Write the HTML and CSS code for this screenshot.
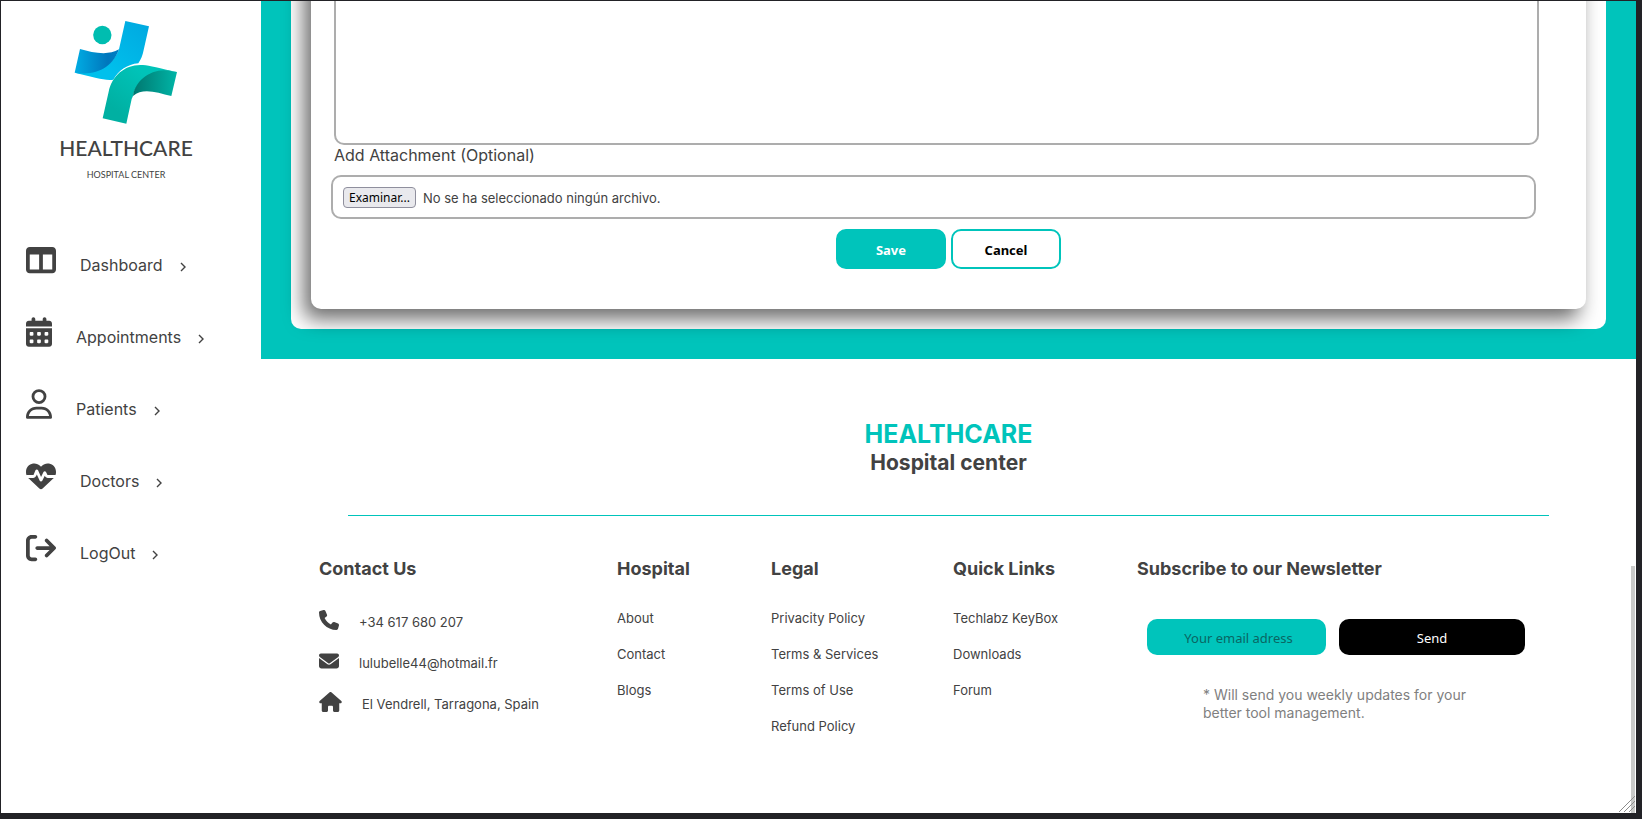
FILE: index.html
```html
<!DOCTYPE html>
<html lang="en">
<head>
<meta charset="utf-8">
<title>Healthcare Hospital Center</title>
<link rel="stylesheet" href="styles.css">
</head>
<body>
<div class="window">
  <aside class="sidebar">
    <div class="logo">
      <svg class="logo-mark" viewBox="220 60 318 315" aria-hidden="true">
        <defs>
          <linearGradient id="blue" x1="0" y1="1" x2="1" y2="0"><stop offset=".3" stop-color="#00c0ec"/><stop offset="1" stop-color="#00a8e0"/></linearGradient>
          <linearGradient id="blueFold" x1="0" y1="0" x2="1" y2="0"><stop offset="0" stop-color="#00ade4"/><stop offset=".75" stop-color="#0076bc"/><stop offset="1" stop-color="#0080c4"/></linearGradient>
          <linearGradient id="green" x1="1" y1="0" x2="0" y2="1"><stop offset=".3" stop-color="#00c3b8"/><stop offset=".8" stop-color="#00b0a2"/></linearGradient>
          <linearGradient id="greenFold" x1="0" y1="0" x2="1" y2="0"><stop offset="0" stop-color="#00776f"/><stop offset="1" stop-color="#00b5a7"/></linearGradient>
        </defs>
        <circle cx="308" cy="105" r="27.500" fill="#00bdb0"/>
        <path fill="url(#blue)" d="M377 63L448 79L432 150C429 166 424 178 416 190C383 193 357 211 341 239C325 241 308 238 290 234L225 218C300 222 343 190 358 148Z"/>
        <path fill="url(#blueFold)" d="M241 147C280 158 325 168 358 148C340 200 290 230 225 218Z"/>
        <path fill="url(#green)" d="M309 355L327 275C337 226 378 191 430 195C450 197 480 205 532 216L502 212C450 216 408 245 400 288L396 297L380 371Z"/>
        <path fill="url(#greenFold)" d="M532 216L515 288C470 277 430 262 400 288C405 245 450 207 502 211Z"/>
      </svg>
      <span class="logo-name">HEALTHCARE</span>
      <span class="logo-sub">HOSPITAL CENTER</span>
    </div>
    <nav class="menu">
      <a class="menu-item" href="#">
        <svg class="icon" viewBox="0 0 512 512"><path d="M0 96C0 60.700 28.700 32 64 32H448c35.300 0 64 28.700 64 64V416c0 35.300-28.700 64-64 64H64c-35.300 0-64-28.700-64-64V96zm64 64V416H224V160H64zm384 0H288V416H448V160z"/></svg>
        <span>Dashboard</span>
        <svg class="chevron" viewBox="0 0 6 10"><path d="M1 1l4 4-4 4"/></svg>
      </a>
      <a class="menu-item" href="#">
        <svg class="icon icon-narrow" viewBox="0 0 448 512"><path d="M128 0c17.700 0 32 14.300 32 32V64H288V32c0-17.700 14.300-32 32-32s32 14.300 32 32V64h48c26.500 0 48 21.500 48 48v48H0V112C0 85.500 21.500 64 48 64H96V32c0-17.700 14.300-32 32-32zM0 192H448V464c0 26.500-21.500 48-48 48H48c-26.500 0-48-21.500-48-48V192zm64 80v32c0 8.800 7.200 16 16 16h32c8.800 0 16-7.200 16-16V272c0-8.800-7.200-16-16-16H80c-8.800 0-16 7.200-16 16zm128 0v32c0 8.800 7.200 16 16 16h32c8.800 0 16-7.200 16-16V272c0-8.800-7.200-16-16-16H208c-8.800 0-16 7.200-16 16zm144-16c-8.800 0-16 7.200-16 16v32c0 8.800 7.200 16 16 16h32c8.800 0 16-7.200 16-16V272c0-8.800-7.200-16-16-16H336zM64 400v32c0 8.800 7.200 16 16 16h32c8.800 0 16-7.200 16-16V400c0-8.800-7.200-16-16-16H80c-8.800 0-16 7.200-16 16zm144-16c-8.800 0-16 7.200-16 16v32c0 8.800 7.200 16 16 16h32c8.800 0 16-7.200 16-16V400c0-8.800-7.200-16-16-16H208zm112 16v32c0 8.800 7.200 16 16 16h32c8.800 0 16-7.200 16-16V400c0-8.800-7.200-16-16-16H336c-8.800 0-16 7.200-16 16z"/></svg>
        <span>Appointments</span>
        <svg class="chevron" viewBox="0 0 6 10"><path d="M1 1l4 4-4 4"/></svg>
      </a>
      <a class="menu-item" href="#">
        <svg class="icon icon-narrow" viewBox="0 0 448 512"><path d="M304 128a80 80 0 1 0 -160 0 80 80 0 1 0 160 0zM96 128a128 128 0 1 1 256 0A128 128 0 1 1 96 128zM49.300 464H398.700c-8.900-63.300-63.300-112-129-112H178.300c-65.700 0-120.100 48.700-129 112zM0 482.300C0 383.800 79.800 304 178.300 304h91.400C368.200 304 448 383.800 448 482.300c0 16.400-13.300 29.700-29.700 29.700H29.700C13.300 512 0 498.700 0 482.300z"/></svg>
        <span>Patients</span>
        <svg class="chevron" viewBox="0 0 6 10"><path d="M1 1l4 4-4 4"/></svg>
      </a>
      <a class="menu-item" href="#">
        <svg class="icon" viewBox="0 0 512 512"><path d="M228.300 469.100L47.600 300.400c-4.200-3.900-8.200-8.100-11.900-12.400h87c22.600 0 43-13.600 51.700-34.500l10.500-25.200 49.300 109.500c3.800 8.500 12.100 14 21.400 14.100s17.800-5 22-13.300L320 253.700l1.700 3.400c9.500 19 28.900 31 50.100 31H476.300c-3.700 4.300-7.700 8.500-11.900 12.400L283.700 469.100c-7.500 7-17.400 10.900-27.700 10.900s-20.200-3.900-27.700-10.900zM503.700 240h-132c-3 0-5.800-1.700-7.200-4.400l-23.200-46.300c-4.100-8.100-12.400-13.300-21.500-13.300s-17.400 5.100-21.500 13.300l-41.400 82.800L205.900 158.200c-3.900-8.700-12.700-14.300-22.200-14.100s-18.100 5.900-21.800 14.800l-31.800 76.300c-1.200 3-4.200 4.900-7.400 4.900H16c-2.600 0-5 .4-7.300 1.100C3 225.200 0 208.200 0 190.900v-5.800c0-69.900 50.500-129.500 119.400-141C165 36.500 211.400 51.400 244 84l12 12 12-12c32.600-32.600 79-47.500 124.600-39.900C461.500 55.600 512 115.200 512 185.100v5.800c0 16.900-2.800 33.500-8.300 49.100z"/></svg>
        <span>Doctors</span>
        <svg class="chevron" viewBox="0 0 6 10"><path d="M1 1l4 4-4 4"/></svg>
      </a>
      <a class="menu-item" href="#">
        <svg class="icon" viewBox="0 0 512 512"><path d="M502.600 278.600c12.500-12.500 12.500-32.800 0-45.300l-128-128c-12.500-12.500-32.800-12.500-45.300 0s-12.500 32.800 0 45.300L402.700 224 192 224c-17.700 0-32 14.300-32 32s14.300 32 32 32l210.700 0-73.400 73.400c-12.500 12.500-12.500 32.800 0 45.300s32.800 12.500 45.300 0l128-128zM160 96c17.700 0 32-14.300 32-32s-14.300-32-32-32L96 32C43 32 0 75 0 128L0 384c0 53 43 96 96 96l64 0c17.700 0 32-14.300 32-32s-14.300-32-32-32l-64 0c-17.700 0-32-14.300-32-32l0-256c0-17.700 14.300-32 32-32l64 0z"/></svg>
        <span>LogOut</span>
        <svg class="chevron" viewBox="0 0 6 10"><path d="M1 1l4 4-4 4"/></svg>
      </a>
    </nav>
  </aside>

  <div class="content">
    <main class="stage">
      <div class="panel">
        <form class="card">
          <textarea class="message" aria-label="Message"></textarea>
          <label class="field-label" for="attachment">Add Attachment (Optional)</label>
          <div class="file-field">
            <input class="file-input" type="file" id="attachment">
            <label class="file-button" for="attachment">Examinar...</label>
            <span class="file-status">No se ha seleccionado ningún archivo.</span>
          </div>
          <div class="actions">
            <button class="btn btn-save" type="submit">Save</button>
            <button class="btn btn-cancel" type="button">Cancel</button>
          </div>
        </form>
      </div>
    </main>

    <footer class="footer">
      <div class="brand">
        <h2 class="brand-name">HEALTHCARE</h2>
        <p class="brand-sub">Hospital center</p>
      </div>
      <hr class="rule">
      <div class="columns">
        <section>
          <h3 class="heading">Contact Us</h3>
          <ul class="contacts">
            <li><svg class="contact-icon" viewBox="0 0 512 512"><path d="M164.900 24.600c-7.700-18.600-28-28.500-47.400-23.200l-88 24C12.100 30.200 0 46 0 64C0 311.400 200.600 512 448 512c18 0 33.800-12.100 38.600-29.500l24-88c5.300-19.400-4.600-39.700-23.200-47.400l-96-40c-16.300-6.800-35.200-2.100-46.300 11.600L304.700 368C234.300 334.700 177.300 277.700 144 207.300L193.300 167c13.700-11.200 18.400-30 11.600-46.300l-40-96z"/></svg><span>+34 617 680 207</span></li>
            <li><svg class="contact-icon" viewBox="0 0 512 512"><path d="M48 64C21.500 64 0 85.500 0 112c0 15.100 7.100 29.300 19.200 38.400L236.800 313.600c11.400 8.500 27 8.500 38.400 0L492.800 150.400c12.100-9.100 19.200-23.300 19.200-38.400c0-26.500-21.500-48-48-48H48zM0 176V384c0 35.300 28.700 64 64 64H448c35.300 0 64-28.700 64-64V176L294.400 339.200c-22.800 17.100-54 17.100-76.800 0L0 176z"/></svg><span>lulubelle44@hotmail.fr</span></li>
            <li><svg class="contact-icon contact-icon-wide" viewBox="0 0 576 512"><path d="M575.800 255.500c0 18-15 32.100-32 32.100h-32l.7 160.200c0 2.700-.2 5.400-.5 8.100V472c0 22.100-17.900 40-40 40H456c-1.100 0-2.200 0-3.300-.1c-1.400 .1-2.800 .1-4.200 .1H416 392c-22.100 0-40-17.900-40-40V448 384c0-17.700-14.300-32-32-32H256c-17.700 0-32 14.300-32 32v64 24c0 22.100-17.900 40-40 40H160 128.100c-1.500 0-3-.1-4.500-.2c-1.200 .1-2.400 .2-3.600 .2H104c-22.100 0-40-17.900-40-40V360c0-.9 0-1.900 .1-2.800V287.600H32c-18 0-32-14-32-32.100c0-9 3-17 10-24L266.400 8c7-7 15-8 22-8s15 2 21 7L564.800 231.500c8 7 12 15 11 24z"/></svg><span>El Vendrell, Tarragona, Spain</span></li>
          </ul>
        </section>
        <section>
          <h3 class="heading">Hospital</h3>
          <ul class="links">
            <li><a href="#">About</a></li>
            <li><a href="#">Contact</a></li>
            <li><a href="#">Blogs</a></li>
          </ul>
        </section>
        <section>
          <h3 class="heading">Legal</h3>
          <ul class="links">
            <li><a href="#">Privacity Policy</a></li>
            <li><a href="#">Terms &amp; Services</a></li>
            <li><a href="#">Terms of Use</a></li>
            <li><a href="#">Refund Policy</a></li>
          </ul>
        </section>
        <section>
          <h3 class="heading">Quick Links</h3>
          <ul class="links">
            <li><a href="#">Techlabz KeyBox</a></li>
            <li><a href="#">Downloads</a></li>
            <li><a href="#">Forum</a></li>
          </ul>
        </section>
        <section>
          <h3 class="heading">Subscribe to our Newsletter</h3>
          <form class="newsletter">
            <input class="email" type="email" placeholder="Your email adress" aria-label="Your email adress">
            <button class="send" type="submit">Send</button>
          </form>
          <p class="note">* Will send you weekly updates for your better tool management.</p>
        </section>
      </div>
    </footer>
  </div>
  <div class="scroll-thumb"></div>
  <svg class="grip" viewBox="0 0 16 16" aria-hidden="true"><path d="M0 16L16 0M5 16L16 5M10 16L16 10"/></svg>
</div>
</body>
</html>
```
FILE: styles.css
```css
* {
  box-sizing: border-box;
}

body {
  margin: 0;
  padding: 1px 6px 6px 1px;
  min-height: 100vh;
  display: flex;
  background: #222226;
  color: #424242;
  font-family: Inter, "Open Sans", sans-serif;
  font-size: 16px;
}

h2, h3, p, ul {
  margin: 0;
  padding: 0;
}

ul {
  list-style: none;
}

a {
  color: inherit;
  text-decoration: none;
}

.window {
  position: relative;
  flex: 1;
  display: flex;
  background: #fff;
}

.sidebar {
  flex: 0 0 260px;
}

.logo {
  display: flex;
  flex-direction: column;
  align-items: center;
  width: 250px;
  padding-top: 19px;
}

.logo-mark {
  width: 106px;
  height: 105px;
}

.logo-name {
  margin-top: 9px;
  font-family: Lato, sans-serif;
  font-size: 21px;
  font-weight: 500;
  line-height: 28px;
}

.logo-sub {
  margin-top: 7px;
  font-family: Lato, sans-serif;
  font-size: 9px;
  line-height: 12px;
}

.menu {
  padding: 64px 0 0 25px;
}

.menu-item {
  display: flex;
  align-items: center;
  height: 40px;
  margin-bottom: 32px;
}

.menu-item span {
  margin: 0 17px 0 24px;
  line-height: 20px;
}

.icon {
  width: 30px;
  height: 30px;
  margin-bottom: 10px;
  fill: currentColor;
}

.icon-narrow {
  width: 26px;
}

.chevron {
  width: 6px;
  height: 10px;
  margin-top: 4px;
  fill: none;
  stroke: currentColor;
  stroke-width: 1.4;
}

.content {
  flex: 1;
  min-width: 0;
}

.stage {
  overflow: hidden;
  padding: 0 30px 30px;
  background: #00c4bb;
}

.panel {
  padding: 0 20px 20px;
  border-radius: 0 0 10px 10px;
  background: #fff;
}

.card {
  margin-top: -40px;
  padding: 40px 50px 40px 20px;
  border-radius: 10px;
  background: #fff;
  box-shadow: -7px 10px 20px rgba(0, 0, 0, .58);
}

.message {
  display: block;
  width: 100%;
  height: 144px;
  margin-left: 3px;
  border: 2px solid #adadad;
  border-top: 0;
  border-radius: 0 0 10px 10px;
  background: #fff;
  resize: none;
}

.field-label {
  display: block;
  margin: 0 3px 10px;
  line-height: 20px;
}

.file-field {
  position: relative;
  display: flex;
  align-items: center;
  gap: 7px;
  height: 44px;
  padding: 0 10px;
  border: 2px solid #adadad;
  border-radius: 10px;
  font-size: 13px;
}

.file-input {
  position: absolute;
  inset: 0;
  opacity: 0;
}

.file-button {
  padding: 0 5px;
  border: 1px solid #8f8f9d;
  border-radius: 4px;
  background: #e9e9ed;
  color: #000;
  font-family: "Noto Sans", sans-serif;
  font-size: 12px;
  line-height: 19px;
}

.file-status {
  padding-top: 2px;
}

.actions {
  display: flex;
  justify-content: center;
  gap: 5px;
  margin: 10px -30px 0 0;
}

.btn {
  width: 110px;
  height: 40px;
  padding: 2px 0 0;
  border: 2px solid #00c4bb;
  border-radius: 10px;
  font-family: "Noto Sans", sans-serif;
  font-size: 13px;
  font-weight: 700;
}

.btn-save {
  background: #00c4bb;
  color: #fff;
}

.btn-cancel {
  background: #fff;
  color: #000;
}

.footer {
  padding: 60px 58px 40px;
}

.brand {
  text-align: center;
  font-weight: 700;
}

.brand-name {
  color: #00c4bb;
  font-size: 25px;
  line-height: 30px;
}

.brand-sub {
  font-size: 21px;
  line-height: 28px;
}

.rule {
  margin: 38px 29px 0;
  border: 0;
  border-top: 1px solid #00c4bb;
}

.columns {
  display: grid;
  grid-template-columns: 298fr 154fr 182fr 184fr 441fr;
  margin-top: 41px;
}

.heading {
  font-size: 18px;
  line-height: 24px;
  white-space: nowrap;
}

.contacts {
  padding-top: 28px;
  font-size: 13px;
}

.contacts li {
  display: flex;
  align-items: center;
  gap: 20px;
  height: 21px;
  margin-bottom: 20px;
}

.contacts span {
  padding-top: 5px;
}

.contact-icon {
  width: 20px;
  height: 20px;
  fill: currentColor;
}

.contact-icon-wide {
  width: 23px;
}

.links {
  padding-top: 19px;
  font-size: 13px;
  line-height: 36px;
}

.newsletter {
  display: flex;
  gap: 13px;
  padding: 38px 53px 0 10px;
}

.email,
.send {
  height: 36px;
  padding: 2px 0 0;
  border: 0;
  border-radius: 10px;
  font-family: "Noto Sans", sans-serif;
  font-size: 13px;
  text-align: center;
}

.email {
  flex: 177 1 0;
  min-width: 0;
  padding-left: 4px;
  background: #00c4bb;
}

.email::placeholder {
  color: #0a6663;
}

.send {
  flex: 188 1 0;
  background: #000;
  color: #fff;
}

.note {
  width: 280px;
  margin: 31px 0 0 66px;
  color: #808080;
  font-size: 14px;
  line-height: 18px;
}

.scroll-thumb {
  position: absolute;
  right: 1px;
  bottom: 0;
  width: 4px;
  height: 247px;
  background: #c9cac9;
}

.grip {
  position: absolute;
  right: 1px;
  bottom: 1px;
  width: 16px;
  height: 16px;
  fill: none;
  stroke: #8c8c8c;
}
```
